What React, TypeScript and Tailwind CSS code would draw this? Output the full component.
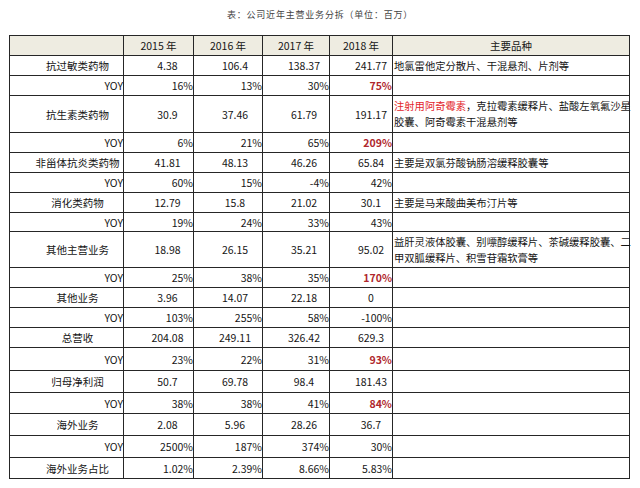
import React from "react";

type Row = {
  label: string;
  yoy?: boolean;
  vals: string[];
  hot?: boolean;
  note?: React.ReactNode;
  h: string;
};

const rows: Row[] = [
  { label: "抗过敏类药物", vals: ["4.38", "106.4", "138.37", "241.77"], note: "地氯雷他定分散片、干混悬剂、片剂等", h: "h-[20px]" },
  { label: "YOY", yoy: true, vals: ["16%", "13%", "30%", "75%"], hot: true, h: "h-[20px]" },
  {
    label: "抗生素类药物",
    vals: ["30.9", "37.46", "61.79", "191.17"],
    note: (
      <>
        <span className="text-[#e3262b]">注射用阿奇霉素</span>，克拉霉素缓释片、盐酸左氧氟沙星
        <br />
        胶囊、阿奇霉素干混悬剂等
      </>
    ),
    h: "h-[37px]",
  },
  { label: "YOY", yoy: true, vals: ["6%", "21%", "65%", "209%"], hot: true, h: "h-[20px]" },
  { label: "非甾体抗炎类药物", vals: ["41.81", "48.13", "46.26", "65.84"], note: "主要是双氯芬酸钠肠溶缓释胶囊等", h: "h-[20px]" },
  { label: "YOY", yoy: true, vals: ["60%", "15%", "-4%", "42%"], h: "h-[20px]" },
  { label: "消化类药物", vals: ["12.79", "15.8", "21.02", "30.1"], note: "主要是马来酸曲美布汀片等", h: "h-[20px]" },
  { label: "YOY", yoy: true, vals: ["19%", "24%", "33%", "43%"], h: "h-[19px]" },
  {
    label: "其他主营业务",
    vals: ["18.98", "26.15", "35.21", "95.02"],
    note: (
      <>
        益肝灵液体胶囊、别嘌醇缓释片、茶碱缓释胶囊、二
        <br />
        甲双胍缓释片、积雪苷霜软膏等
      </>
    ),
    h: "h-[36px]",
  },
  { label: "YOY", yoy: true, vals: ["25%", "38%", "35%", "170%"], hot: true, h: "h-[20px]" },
  { label: "其他业务", vals: ["3.96", "14.07", "22.18", "0"], h: "h-[20px]" },
  { label: "YOY", yoy: true, vals: ["103%", "255%", "58%", "-100%"], h: "h-[20px]" },
  { label: "总营收", vals: ["204.08", "249.11", "326.42", "629.3"], h: "h-[20px]" },
  { label: "YOY", yoy: true, vals: ["23%", "22%", "31%", "93%"], hot: true, h: "h-[23px]" },
  { label: "归母净利润", vals: ["50.7", "69.78", "98.4", "181.43"], h: "h-[22px]" },
  { label: "YOY", yoy: true, vals: ["38%", "38%", "41%", "84%"], hot: true, h: "h-[21px]" },
  { label: "海外业务", vals: ["2.08", "5.96", "28.26", "36.7"], h: "h-[22px]" },
  { label: "YOY", yoy: true, vals: ["2500%", "187%", "374%", "30%"], h: "h-[22px]" },
  { label: "海外业务占比", yoy: true, vals: ["1.02%", "2.39%", "8.66%", "5.83%"], h: "h-[21px]" },
];

const valuePad = ["pl-[18px]", "pl-[14px]", "pl-[16px]", "pl-[20px]"];

export default function App() {
  return (
    <div
      className="h-[488px] w-[640px] bg-white text-[#151515]"
      style={{ fontFamily: '"Noto Sans CJK SC", "Noto Sans", sans-serif' }}
    >
      <p className="pt-[8px] text-center text-[9px] leading-[14px] tracking-[0.8px] text-[#444]">
        表：公司近年主营业务分拆（单位：百万）
      </p>

      <table className="ml-[9px] mt-[13px] w-[620px] table-fixed border-collapse text-[10.5px] leading-[15px]">
        <colgroup>
          <col className="w-[114px]" />
          <col className="w-[70px]" />
          <col className="w-[69px]" />
          <col className="w-[67px]" />
          <col className="w-[63px]" />
          <col className="w-[237px]" />
        </colgroup>
        <thead>
          <tr className="h-[20px] bg-[#eeece1]">
            <th className="border border-[#262626] p-0 font-normal" />
            <th className="border border-[#262626] p-0 font-normal">2015 年</th>
            <th className="border border-[#262626] p-0 font-normal">2016 年</th>
            <th className="border border-[#262626] p-0 font-normal">2017 年</th>
            <th className="border border-[#262626] p-0 font-normal">2018 年</th>
            <th className="border border-[#262626] p-0 font-normal">主要品种</th>
          </tr>
        </thead>
        <tbody>
          {rows.map((r, i) => {
            const isYoyLabel = r.label === "YOY";
            return (
              <tr key={i} className={r.h}>
                <td
                  className={`border border-[#262626] p-0 ${
                    isYoyLabel ? "pr-0 text-right" : "pl-[22px] text-center"
                  }`}
                >
                  {r.label}
                </td>
                {r.vals.map((v, j) => {
                  const hot = r.hot && j === 3;
                  return (
                    <td
                      key={j}
                      className={`border border-[#262626] p-0 ${
                        r.yoy ? "text-right" : `text-center ${valuePad[j]}`
                      } ${hot ? "font-bold text-[#b0272d]" : ""}`}
                    >
                      {v}
                    </td>
                  );
                })}
                <td className="whitespace-nowrap border border-[#262626] p-0 pl-[1px] text-left text-[10.3px] leading-[16px]">
                  {r.note}
                </td>
              </tr>
            );
          })}
        </tbody>
      </table>
    </div>
  );
}
